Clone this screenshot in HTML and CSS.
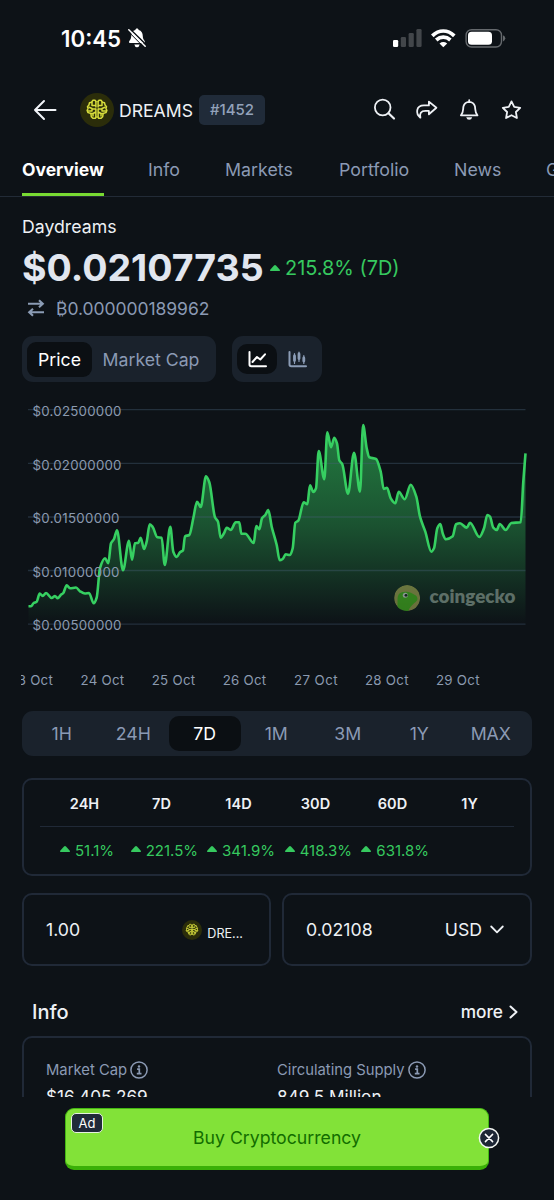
FILE: index.html
```html
<!DOCTYPE html>
<html lang="en">
<head>
<meta charset="utf-8">
<title>DREAMS – Daydreams price</title>
<link rel="stylesheet" href="styles.css">
</head>
<body>
<svg class="defs" aria-hidden="true">
  <symbol id="brain" viewBox="0 0 34 34">
    <circle cx="17" cy="17" r="17" fill="#2b2d0a"/>
    <g fill="none" stroke="#d6dc3c" stroke-width="1.5" stroke-linejoin="round" stroke-linecap="round">
      <path d="M16 8.500l-1-1.200h-2l-1.500 2-2 .4-.6 2.400-1.400 1.600.6 1.800-1 1.800.8 2.200 2 .6 1 .6.4 3 1.600 1.600h2.400l.9-1.200M18 8.500l1-1.200h2l1.500 2 2 .4.6 2.400 1.400 1.600-.6 1.800 1 1.800-.8 2.200-2 .6-1 .6-.4 3-1.600 1.600h-2.400l-.9-1.200"/>
      <path d="M15.900 8.500v5.500M18.100 8.500v5.500M15.900 16v8.100M18.100 16v8.100M12 9.500v3h3.500M22 9.500v3h-3.500M9 14.200l3 1.300v2.500h-4M25 14.200l-3 1.300v2.500h4M15.800 16h-3.500M18.200 16h3.500M10.500 20.500h2.500l2.800-1.500M23.500 20.500h-2.500l-2.800-1.500M13 20.800v2.200M21 20.800v2.200"/>
    </g>
  </symbol>
  <symbol id="up" viewBox="0 0 10 6"><path d="M5 0Q5.500 0 6 .5L9.600 4.400Q10.500 6 9 6H1Q-.5 6 .4 4.400L4 .5Q4.500 0 5 0z" fill="#36c95f"/></symbol>
  <symbol id="info" viewBox="0 0 18 18">
    <circle cx="9" cy="9" r="8.100" fill="none" stroke="currentColor" stroke-width="1.500"/>
    <circle cx="9" cy="5.500" r="1.200" fill="currentColor"/>
    <path d="M7.100 8.200H9.300V12.600M6.800 12.700H11.500" fill="none" stroke="currentColor" stroke-width="1.700"/>
  </symbol>
</svg>

<main class="screen">
  <div class="status">
    <span class="time">10:45</span>
    <svg class="mute" viewBox="0 0 18 20" width="18" height="20">
      <path d="M9 .6C10 .6 10.500 1.200 10.600 2C13.600 2.700 14.700 5 14.800 8.200C14.900 11.700 17 12.500 17 14.200Q17 15 16 15H2Q1 15 1 14.200C1 12.500 3.100 11.700 3.200 8.200C3.300 5 4.400 2.700 7.400 2C7.500 1.200 8 .6 9 .6zM6.300 16.500H11.700Q11 19.300 9 19.300Q7 19.300 6.300 16.500z" fill="#fff"/>
      <path d="M2 1L18.400 17" stroke="#0d1217" stroke-width="1.600"/>
      <path d="M.8 1.800L17.200 18.300" stroke="#fff" stroke-width="1.500" stroke-linecap="round"/>
      <path d="M0 3.200L16 19.300" stroke="#0d1217" stroke-width="1"/>
    </svg>
    <svg class="radios" viewBox="393 26 114 22" width="114" height="22">
      <rect x="393" y="39" width="5.200" height="7" rx="1.300" fill="#fff"/>
      <g fill="#42464a"><rect x="400.800" y="36" width="5.200" height="10" rx="1.300"/><rect x="408.600" y="32" width="5.200" height="14" rx="1.300"/><rect x="416.400" y="28" width="5.200" height="18" rx="1.300"/></g>
      <g fill="none" stroke="#fff" stroke-width="3.700"><path d="M432.300 34.900Q437.300 30 443.300 30T454.300 34.900"/><path d="M436.200 39Q439.500 36.100 443.300 36.100T450.400 39"/></g>
      <path d="M439.500 42.400Q443.300 39.500 447.200 42.400L443.300 46.200z" fill="#fff"/>
      <rect x="466.100" y="28.700" width="35.400" height="17.300" rx="5.500" fill="none" stroke="#65696d" stroke-width="1.400"/>
      <rect x="468" y="30.800" width="24" height="13" rx="3.600" fill="#fff"/>
      <path d="M503 34.300Q505.300 35.200 505.300 37.300T503 40.500z" fill="#65696d"/>
    </svg>
  </div>

  <header class="head">
    <svg class="back" viewBox="0 0 24 22" width="24" height="22"><path d="M11 2L2 11l9 9M2 11H22.500" fill="none" stroke="#f1f4f8" stroke-width="2" stroke-linecap="round" stroke-linejoin="round"/></svg>
    <svg class="coin" width="34" height="34"><use href="#brain"/></svg>
    <h1 class="symbol">DREAMS</h1>
    <span class="rank">#1452</span>
    <svg class="tools" viewBox="373 96 150 28" width="150" height="28">
      <g fill="none" stroke="#eef1f5" stroke-width="1.800" stroke-linejoin="round" stroke-linecap="round">
        <circle cx="382.700" cy="107.500" r="7.800"/><path d="M388.500 113.200L394 118.500" stroke-width="2.200"/>
        <path d="M428.900 101.600L436.400 107.800L428.900 114.300V110.900H425.500C420.800 110.900 419.400 113.500 420.400 117.700C415.600 114 415.600 105.400 424 105.400H428.900z"/>
        <path d="M460.900 115.300C463.800 112.500 462.800 109 463.500 106.200Q464.600 102 469.200 101.800Q473.800 102 474.900 106.200C475.600 109 474.600 112.500 477.500 115.300zM469.200 101.500V100.200"/>
        <path d="M511.500 101.400L514.200 106.900L520.200 107.800L515.900 112L516.900 118L511.500 115.200L506.100 118L507.100 112L502.800 107.800L508.800 106.900z"/>
      </g>
      <path d="M466.200 117.200H472.200Q471.500 119.800 469.200 119.800T466.200 117.200z" fill="#eef1f5"/>
    </svg>
  </header>

  <nav class="tabs">
    <a class="tab active">Overview</a><a class="tab t-info">Info</a><a class="tab t-markets">Markets</a><a class="tab t-portfolio">Portfolio</a><a class="tab t-news">News</a><a class="tab t-guides">Guides</a>
  </nav>

  <section class="quote">
    <h2 class="name">Daydreams</h2>
    <div class="price-row">
      <span class="price">$0.02107735</span>
      <svg class="big-up" width="10" height="6"><use href="#up"/></svg>
      <span class="change">215.8% (7D)</span>
    </div>
    <div class="btc-row">
      <svg viewBox="0 0 18 18" width="18" height="18"><path d="M1 4.800H15.500M12 1.300L15.800 4.800L12 8.300M17 13.200H2.500M6 9.700L2.200 13.200L6 16.700" fill="none" stroke="#8b9cb5" stroke-width="2.100"/></svg>
      <span class="btc">₿0.000000189962</span>
    </div>
  </section>

  <div class="toggles">
    <div class="seg"><span class="seg-item on">Price</span><span class="seg-item cap">Market Cap</span></div>
    <div class="seg kinds">
      <span class="kind on"><svg viewBox="0 0 19 17" width="19" height="17"><path d="M1.500 1V13.500Q1.500 15.300 3.300 15.300H18M4.500 11L9 6L12.300 8.500L17 3.300" fill="none" stroke="#fff" stroke-width="2" stroke-linecap="round" stroke-linejoin="round"/></svg></span>
      <span class="kind"><svg viewBox="0 0 19 17" width="19" height="17"><g fill="none" stroke="#8b9cb5" stroke-linecap="round"><path d="M1.500 1V13.500Q1.500 15.300 3.300 15.300H18" stroke-width="2"/><path d="M6.500 2.500V12.500M11 1V10.500M15.800 4.500V12.500" stroke-width="1.200"/><path d="M6.500 5V9.500M11 3V7.500M15.800 7V10" stroke-width="2.800"/></g></svg></span>
    </div>
  </div>

  <svg class="chart" viewBox="0 396 554 300" width="554" height="300">
    <defs><linearGradient id="fade" gradientUnits="userSpaceOnUse" x1="0" y1="425" x2="0" y2="624">
      <stop offset="0" stop-color="#2fb457" stop-opacity=".66"/><stop offset=".5" stop-color="#2fb457" stop-opacity=".4"/><stop offset="1" stop-color="#2fb457" stop-opacity="0"/></linearGradient>
      <clipPath id="axis"><rect x="21" y="660" width="510" height="40"/></clipPath>
      <clipPath id="badge"><circle cx="407.100" cy="598" r="13"/></clipPath></defs>
    <path id="area" fill="url(#fade)"/>
    <path class="grid" d="M28 409.700H525.500M28 463.300H525.500M28 517H525.500M28 570.500H525.500M28 624.200H525.500"/>
    <g clip-path="url(#badge)" opacity=".62">
      <circle cx="407.100" cy="598" r="13" fill="#a0a351"/>
      <path d="M397.500 612V600C397.500 594 400 592 404 592C408 591 412 593 414.500 594.800C417.500 596 418 599 417 600.500C415.500 603 410.500 604.500 408 612z" fill="#48b91d"/>
      <circle cx="405.300" cy="595.300" r="2.500" fill="#d4dbd5"/><circle cx="406" cy="595.300" r="1.400" fill="#15251c"/>
    </g>
    <text class="wordmark" x="429.500" y="603.300" textLength="86" lengthAdjust="spacingAndGlyphs">coingecko</text>
    <path id="line" class="line"/>
    <g class="labels">
      <text x="32.500" y="416.200" textLength="89">$0.02500000</text><text x="32.500" y="469.700" textLength="89">$0.02000000</text><text x="32.500" y="523.200" textLength="87">$0.01500000</text><text x="32.500" y="576.700" textLength="87">$0.01000000</text><text x="32.500" y="630.200" textLength="89">$0.00500000</text>
    </g>
    <g class="labels" clip-path="url(#axis)">
      <text x="9.300" y="685" textLength="43.500">23 Oct</text><text x="80.600" y="685" textLength="43.500">24 Oct</text><text x="151.700" y="685" textLength="43.500">25 Oct</text><text x="222.700" y="685" textLength="43.500">26 Oct</text><text x="294" y="685" textLength="43.500">27 Oct</text><text x="365" y="685" textLength="43.500">28 Oct</text><text x="436" y="685" textLength="43.500">29 Oct</text>
    </g>
  </svg>

  <div class="ranges"><span>1H</span><span>24H</span><span class="on">7D</span><span>1M</span><span>3M</span><span>1Y</span><span>MAX</span></div>

  <section class="card perf">
    <div class="perf-row perf-head"><span>24H</span><span>7D</span><span>14D</span><span>30D</span><span>60D</span><span>1Y</span></div>
    <div class="perf-row perf-vals">
      <span class="short"><svg width="10" height="6"><use href="#up"/></svg>51.1%</span>
      <span><svg width="10" height="6"><use href="#up"/></svg>221.5%</span>
      <span><svg width="10" height="6"><use href="#up"/></svg>341.9%</span>
      <span><svg width="10" height="6"><use href="#up"/></svg>418.3%</span>
      <span><svg width="10" height="6"><use href="#up"/></svg>631.8%</span>
      <span></span>
    </div>
  </section>

  <div class="convert">
    <div class="card field"><span class="amount">1.00</span><svg class="mini" width="20" height="20"><use href="#brain"/></svg><span class="unit">DRE...</span></div>
    <div class="card field"><span class="amount">0.02108</span><span class="usd">USD</span><svg viewBox="0 0 14 9" width="14" height="9"><path d="M1.200 1.500L7 7.300L12.800 1.500" fill="none" stroke="#eef1f5" stroke-width="1.800" stroke-linecap="round" stroke-linejoin="round"/></svg></div>
  </div>

  <div class="info-head"><h3>Info</h3><a class="more">more</a><svg viewBox="0 0 9 14" width="9" height="14"><path d="M1.500 1.500L7.500 7L1.500 12.500" fill="none" stroke="#eef1f5" stroke-width="2" stroke-linecap="round" stroke-linejoin="round"/></svg></div>

  <section class="card stats">
    <div class="stat"><div class="stat-label"><span>Market Cap</span><svg width="18" height="18"><use href="#info"/></svg></div><div class="stat-value">$16,405,269</div></div>
    <div class="stat"><div class="stat-label"><span>Circulating Supply</span><svg width="18" height="18"><use href="#info"/></svg></div><div class="stat-value">849.5 Million</div></div>
  </section>
</main>

<footer class="ad-zone">
  <div class="ad"><span class="ad-tag">Ad</span>Buy Cryptocurrency
    <svg class="close" viewBox="0 0 22 22" width="22" height="22"><circle cx="11" cy="11" r="9.600" fill="#1c2534" stroke="#f3f6f3" stroke-width="1.500"/><path d="M7.400 7.400L14.600 14.600M14.600 7.400L7.400 14.600" stroke="#fff" stroke-width="1.500" stroke-linecap="round"/></svg>
  </div>
</footer>
<script src="chart.js"></script>
</body>
</html>
```

FILE: styles.css
```css
* { box-sizing: border-box; }
body { margin: 0; background: #0d1217; color: #eef1f5; font-family: Inter, "Liberation Sans", sans-serif; font-size: 17.700px; font-weight: 400; }
h1, h2, h3 { margin: 0; font-weight: 400; }
svg { display: block; flex: none; overflow: visible; }
span, a { white-space: nowrap; }
.defs { width: 0; height: 0; position: absolute; }
.screen { height: 1097px; overflow: hidden; display: flex; flex-direction: column; }
.screen > * { flex: none; }

.status { height: 76px; display: flex; align-items: center; padding: 0 47px 0 61px; }
.time { font-size: 22.300px; font-weight: 600; color: #fff; width: 67px; }
.radios { margin-left: auto; }

.head { height: 66px; display: flex; align-items: center; padding: 2px 31px 0 33px; }
.coin { margin-left: 23px; }
.symbol { margin-left: 5px; width: 74px; font-size: 17.600px; }
.rank { margin-left: 6px; width: 66px; height: 30px; line-height: 30px; text-align: center; border-radius: 5px; background: #202b39; color: #93a2ba; font-size: 15px; font-weight: 500; }
.tools { margin-left: auto; }

.tabs { height: 55px; display: flex; overflow: hidden; padding-left: 22px; border-bottom: 1px solid #222b37; font-size: 17.800px; color: #8b9ab4; }
.tab { line-height: 55px; height: 54px; flex: none; }
.active { width: 82px; font-size: 17.500px; font-weight: 650; color: #fff; border-bottom: 3px solid #78da32; }
.t-info { margin-left: 44px; width: 31px; }
.t-markets { margin-left: 46px; width: 67px; }
.t-portfolio { margin-left: 47px; width: 69px; }
.t-news { margin-left: 46px; width: 46px; }
.t-guides { margin-left: 46px; }

.quote { height: 139px; padding: 17px 22px 0; }
.name { font-size: 17.700px; line-height: 25px; }
.price-row { height: 57px; display: flex; align-items: center; }
.price { width: 241px; font-size: 37.500px; font-weight: 700; color: #e1e6ef; }
.big-up { margin-left: 7px; }
.change { margin-left: 5px; font-size: 19.900px; color: #36c95f; }
.btc-row { height: 24px; display: flex; align-items: center; padding-left: 5px; color: #8b9ab4; }
.btc { margin-left: 11px; font-size: 17.500px; letter-spacing: -.05px; }

.toggles { display: flex; gap: 16px; padding-left: 22px; height: 46px; }
.seg { display: flex; align-items: center; width: 194px; padding: 0 5px; border-radius: 11px; background: #1a222c; }
.seg-item { height: 35px; line-height: 35px; text-align: center; font-size: 17.700px; border-radius: 9px; color: #8b9ab4; }
.seg-item.on { width: 65px; }
.seg-item.cap { width: 118px; }
.on, .seg-item.on { background: #0b0f13; color: #fff; }
.kinds { width: 90px; }
.kind { width: 40px; height: 30px; display: grid; place-items: center; border-radius: 10px; }

.chart { margin-top: 14px; }
.grid { fill: none; stroke: #48607a; stroke-opacity: .38; stroke-width: 1.300; }
.line { fill: none; stroke: #36cf61; stroke-width: 2.600; stroke-linejoin: round; stroke-linecap: butt; }
.labels { font-size: 13.300px; fill: #8b9ab0; }
.wordmark { font-family: Lato, sans-serif; font-weight: 800; font-size: 18.500px; fill: #5d6f67; }

.ranges { margin: 15px 22px 0; height: 45px; padding: 0 5px 0 4px; display: grid; grid-template-columns: repeat(7, 71.500px); align-items: center; border-radius: 11px; background: #1a222c; color: #8b9ab4; font-size: 17.700px; text-align: center; }
.ranges span { height: 35px; line-height: 35px; border-radius: 10px; }

.card { border: 2px solid #202937; border-radius: 10px; }
.perf { margin: 22px 22px 0; height: 98px; padding: 0 16px; }
.perf-row { display: grid; grid-template-columns: repeat(6, 77px); padding-left: 6px; height: 47px; align-items: center; text-align: center; }
.perf-head { border-bottom: 1px solid #202937; font-size: 14.500px; font-weight: 600; padding-top: 1px; }
.perf-vals { color: #36c95f; font-size: 15px; padding-left: 7px; }
.perf-vals span { display: flex; justify-content: flex-end; align-items: center; gap: 5px; padding-right: 3px; }
.perf-vals .short { padding-right: 10px; }
.perf-vals svg { margin-top: -3px; }

.convert { margin: 17px 22px 0; display: grid; grid-template-columns: 249px 250px; gap: 11px; }
.field { height: 73px; padding: 0 26px 0 22px; display: flex; align-items: center; font-size: 17.700px; }
.amount { margin-right: auto; }
.mini { margin-right: 5px; }
.unit { font-size: 12.600px; padding-top: 7px; }
.usd { margin-right: 8px; }

.info-head { height: 70px; padding: 21px 36px 0 32px; display: flex; align-items: center; }
.info-head h3 { font-size: 20px; font-weight: 500; margin-right: auto; }
.more { font-size: 17.300px; font-weight: 500; margin-right: 6px; }

.stats { margin: 0 22px; height: 110px; padding: 21px 22px; display: grid; grid-template-columns: 231px 1fr; }
.stat-label { display: flex; align-items: center; gap: 3px; height: 22px; color: #8b9ab4; font-size: 14.800px; }
.stat-value { font-size: 17.200px; line-height: 31px; }

.ad-zone { padding: 11px 65px 0; }
.ad { position: relative; height: 62px; line-height: 58px; text-align: center; border: 1px solid #43b812; border-bottom: 4px solid #3ab007; border-radius: 9px; background: #82e238; color: #126d00; font-size: 17.700px; }
.ad-tag { position: absolute; left: 5px; top: 4px; width: 32px; height: 20px; border: 1.500px solid #e5f2df; border-radius: 5px; background: #202a39; color: #fff; font-size: 13px; line-height: 18px; }
.close { position: absolute; right: -12px; top: 18px; }
```

FILE: chart.js
```js
const points = [[28.500,606.300],[31,606.300],[33.700,603],[36.700,601.700],[39.700,593.500],[42.700,596],[46,593],[51.700,598],[55,596],[57.700,598.300],[60.700,595],[63.300,593],[66.700,585.300],[70,588.300],[76,587.500],[80,591.300],[85,593.500],[89,593],[93.700,603.300],[96.700,597.500],[100,568],[105,558.300],[108.300,563.300],[111,543.300],[114,539],[117,530.300],[123,570.300],[129,540.700],[132,559.700],[135,543.300],[138.300,542.700],[140.700,537.700],[144,549],[146.700,541.700],[149.700,524.300],[152.700,527],[157.300,537.300],[161.700,537.700],[164.700,565],[170.300,526.700],[173.300,551.700],[176.700,557],[180,552.300],[183,550.300],[185,536.300],[189.300,535],[193.300,518.300],[197,501.700],[200.700,507],[206,476.300],[209.300,482.300],[215,517.300],[218,521.700],[220.700,537.700],[224,533.300],[226.700,527.700],[230.700,530],[235.700,522.300],[239.300,522.300],[241.300,533.700],[245.300,533.700],[253.700,543],[256.300,526],[259.300,529.300],[262,518.300],[265.300,515],[268.300,510],[271.700,526.700],[276.700,545],[279.700,560.300],[282.700,559],[285.700,554.300],[290,555],[292.700,548.300],[295.300,522.700],[298.300,520.700],[303.700,502.300],[307.300,504.300],[310,485.300],[313.300,492],[316,488.300],[318.700,451],[324.300,479.300],[327.300,432.300],[331,447.300],[334.300,437.700],[337,443.300],[339.300,460.300],[342.300,464.300],[348,493.700],[354,452.700],[360,491.700],[363.100,425],[366.700,448.300],[369.300,457.300],[376,459],[380.700,471.700],[383.700,489],[387,487.700],[390.700,498.300],[395.300,503.300],[398.700,491.700],[404.700,499.300],[410.700,484.700],[416.300,496.700],[420,516.700],[425.300,531.700],[431.300,551.700],[434,548.300],[437.300,528.300],[440.300,524],[443,534.300],[446,539.300],[452.700,536.300],[456,524.300],[460,523.300],[466.700,527.700],[470,522.700],[479.300,537],[484,528.300],[487.300,515],[490,516.700],[493.300,527.700],[496.700,530],[499.700,524],[505.700,530],[511.300,523],[520.700,522.300],[523.300,481.700],[525.500,453.300]];

// Monotone cubic interpolation keeps the peaks and troughs at the data points.
const slope = (i) => (points[i + 1][1] - points[i][1]) / (points[i + 1][0] - points[i][0]);
const tangents = points.map((_, i) => {
  if (i === 0) return slope(0);
  if (i === points.length - 1) return slope(i - 1);
  const a = slope(i - 1), b = slope(i);
  return a * b <= 0 ? 0 : (2 * a * b) / (a + b);
});
let d = `M${points[0]}`;
for (let i = 1; i < points.length; i++) {
  const [x0, y0] = points[i - 1], [x1, y1] = points[i], h = (x1 - x0) / 3;
  d += `C${x0 + h},${y0 + h * tangents[i - 1]} ${x1 - h},${y1 - h * tangents[i]} ${x1},${y1}`;
}
document.getElementById("line").setAttribute("d", d);
document.getElementById("area").setAttribute("d", `${d}V624H28.500Z`);
```
